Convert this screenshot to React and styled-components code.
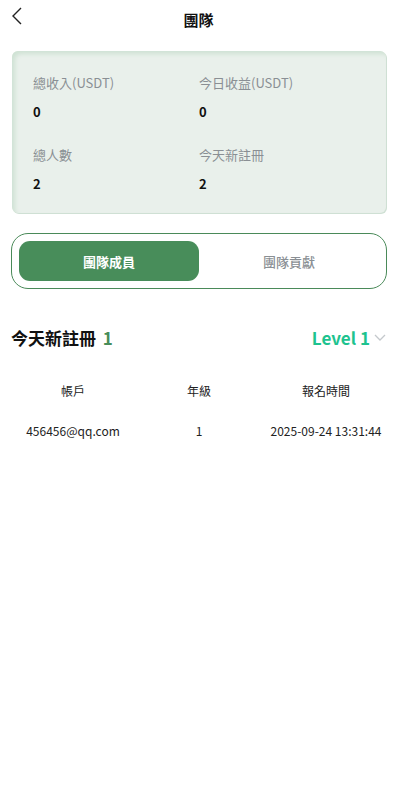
import styled, { createGlobalStyle } from "styled-components";
import { useState } from "react";

const GlobalStyle = createGlobalStyle`
    body {
        margin: 0;
        background: #ffffff;
        font-family: "Noto Sans CJK TC", "Noto Sans", sans-serif;
        color: #111;
    }
`

const stats = [
    { label: '總收入(USDT)', value: '0' },
    { label: '今日收益(USDT)', value: '0' },
    { label: '總人數', value: '2' },
    { label: '今天新註冊', value: '2' },
]

const members = [
    { account: '456456@qq.com', level: '1', time: '2025-09-24 13:31:44' },
]

export default function App() {
    const [tab, setTab] = useState(0)

    return (
        <Page>
            <GlobalStyle />
            <Header>
                <Back>
                    <svg width="12" height="18" viewBox="0 0 12 18" fill="none">
                        <path d="M10 1 L2 9 L10 17" stroke="#222" strokeWidth="1.4" />
                    </svg>
                </Back>
                <Title>團隊</Title>
            </Header>

            <Card>
                {stats.map((s) => (
                    <Stat key={s.label}>
                        <Label>{s.label}</Label>
                        <Value>{s.value}</Value>
                    </Stat>
                ))}
            </Card>

            <Tabs>
                <Tab active={tab === 0} onClick={() => setTab(0)}>團隊成員</Tab>
                <Tab active={tab === 1} onClick={() => setTab(1)}>團隊貢獻</Tab>
            </Tabs>

            <Section>
                <Today>今天新註冊 <span>1</span></Today>
                <Level>
                    Level 1
                    <svg width="14" height="10" viewBox="0 0 14 10" fill="none">
                        <path d="M2 3 L7 8 L12 3" stroke="#c4c8cc" strokeWidth="1.3" />
                    </svg>
                </Level>
            </Section>

            <Table>
                <Row>
                    <Cell>帳戶</Cell>
                    <Cell>年級</Cell>
                    <Cell>報名時間</Cell>
                </Row>
                {members.map((m) => (
                    <Row key={m.account}>
                        <Cell>{m.account}</Cell>
                        <Cell>{m.level}</Cell>
                        <Cell>{m.time}</Cell>
                    </Row>
                ))}
            </Table>
        </Page>
    )
}

const Page = styled.div`
    width: 397px;
    min-height: 792px;
    background: #fff;
`

const Header = styled.div`
    position: relative;
    height: 38px;
    display: flex;
    align-items: center;
    justify-content: center;
`

const Back = styled.div`
    position: absolute;
    left: 11px;
    top: 7px;
    display: flex;
`

const Title = styled.div`
    font-size: 15px;
    font-weight: 700;
    color: #111;
`

const Card = styled.div`
    margin: 13px 11px 0 12px;
    height: 162px;
    box-sizing: border-box;
    padding: 22px 20px 0 21px;
    background: #e9f0eb;
    border-radius: 6px;
    box-shadow: inset 3px 3px 4px #cfe2d4, 1px 1px 0 #cfe0d4;
    display: grid;
    grid-template-columns: 166px 1fr;
    grid-template-rows: 72px 72px;
`

const Stat = styled.div`
    display: flex;
    flex-direction: column;
    gap: 9px;
`

const Label = styled.div`
    font-size: 13px;
    color: #8a8f94;
    line-height: 20px;
`

const Value = styled.div`
    font-size: 13px;
    font-weight: 700;
    color: #111;
    line-height: 20px;
`

const Tabs = styled.div`
    margin: 20px 10px 0 11px;
    height: 56px;
    box-sizing: border-box;
    border: 1px solid #4a8a59;
    border-radius: 17px;
    padding: 7px;
    display: flex;
`

const Tab = styled.div`
    width: 180px;
    height: 40px;
    border-radius: 11px;
    display: flex;
    align-items: center;
    justify-content: center;
    font-size: 13px;
    font-weight: ${(p) => (p.active ? 700 : 500)};
    color: ${(p) => (p.active ? '#ffffff' : '#8a8f94')};
    background: ${(p) => (p.active ? '#488d5a' : 'transparent')};
    cursor: pointer;
`

const Section = styled.div`
    margin-top: 36px;
    padding: 0 10px 0 11px;
    display: flex;
    justify-content: space-between;
    align-items: center;
    height: 24px;
`

const Today = styled.div`
    font-size: 17px;
    font-weight: 700;
    color: #111;

    span {
        color: #488d5a;
        margin-left: 3px;
    }
`

const Level = styled.div`
    display: flex;
    align-items: center;
    gap: 3px;
    font-size: 17px;
    font-weight: 700;
    color: #1ec38f;
`

const Table = styled.div`
    margin-top: 21px;
    padding: 0 7px 0 10px;
`

const Row = styled.div`
    display: grid;
    grid-template-columns: 126px 126px 1fr;
    height: 40px;
    align-items: center;
`

const Cell = styled.div`
    text-align: center;
    font-size: 12px;
    color: #222;
`
